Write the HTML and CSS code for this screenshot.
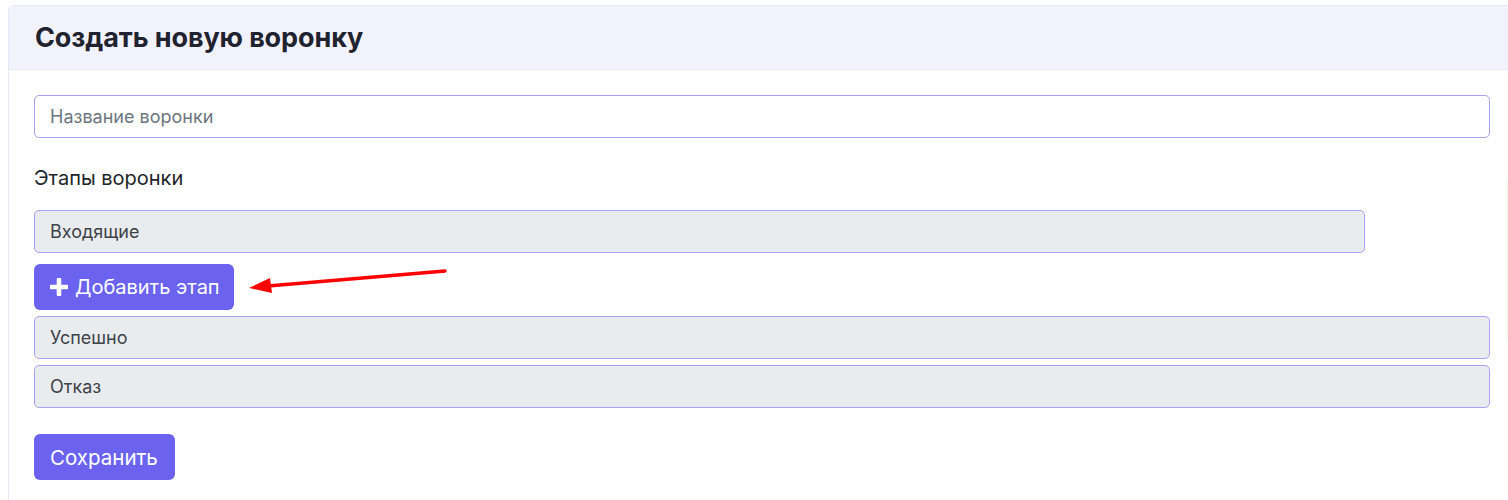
FILE: index.html
```html
<!DOCTYPE html>
<html lang="ru">
<head>
<meta charset="utf-8">
<title>Создать новую воронку</title>
<link rel="stylesheet" href="styles.css">
</head>
<body>
<div class="card">
  <div class="card-header">
    <h1 class="title">Создать новую воронку</h1>
  </div>
  <div class="card-body">
    <input class="field" type="text" placeholder="Название воронки">
    <div class="section-label">Этапы воронки</div>
    <div class="stages">
      <div class="stage-row stage-row--first">
        <input class="field field--stage" type="text" value="Входящие" readonly>
      </div>
      <div class="add-wrap">
        <button class="btn btn--add" type="button">
          <svg class="plus" viewBox="0 0 18 18" width="18" height="18" aria-hidden="true">
            <path d="M9 1.5v15M1.5 9h15" stroke="#fff" stroke-width="4.6" stroke-linecap="round"/>
          </svg>
          <span>Добавить этап</span>
        </button>
        <svg class="arrow" viewBox="0 0 210 30" width="210" height="30" aria-hidden="true">
          <path d="M197 5 L20 20" stroke="#ff0000" stroke-width="3.4" stroke-linecap="round" fill="none"/>
          <path d="M1 22 L22 12 L24 27 Z" fill="#ff0000"/>
        </svg>
      </div>
      <div class="stage-row">
        <input class="field field--stage" type="text" value="Успешно" readonly>
      </div>
      <div class="stage-row">
        <input class="field field--stage" type="text" value="Отказ" readonly>
      </div>
    </div>
    <button class="btn btn--save" type="button">Сохранить</button>
  </div>
</div>
<div class="edge-mark"></div>
</body>
</html>
```

FILE: styles.css
```css
html, body {
  overflow: hidden;
}

body {
  margin: 0;
  padding: 5px 0 0 8px;
  background: #ffffff;
  font-family: Inter, "Noto Sans", "Liberation Sans", sans-serif;
  color: #212529;
  width: 1508px;
  box-sizing: border-box;
  height: 500px;
  position: relative;
}

.card {
  width: 1510px;
  border: 1px solid #e7e6f7;
  border-right: none;
  border-radius: 6px 0 0 0;
  background: #ffffff;
  min-height: 520px;
}

.card-header {
  height: 63px;
  background: #f2f2fc;
  border-bottom: 1px solid #e7e6f7;
  border-radius: 6px 0 0 0;
  display: flex;
  align-items: center;
  padding: 0 26px;
}

.title {
  margin: 0;
  font-size: 27px;
  font-weight: 700;
  color: #1f2330;
  letter-spacing: -0.1px;
}

.card-body {
  padding: 25px 25px 25px 25px;
  display: flex;
  flex-direction: column;
  align-items: flex-start;
}

.field {
  display: block;
  box-sizing: border-box;
  width: 1456px;
  height: 43px;
  border: 1px solid #a7a2f3;
  border-radius: 5px;
  padding: 0 15px;
  font-family: inherit;
  font-size: 18px;
  color: #495057;
  background: #ffffff;
  outline: none;
}

.field::placeholder {
  color: #6c757d;
}

.field--stage {
  background: #e9ecef;
  color: #3d4248;
}

.section-label {
  margin-top: 27px;
  margin-bottom: 18px;
  font-size: 20px;
  line-height: 27px;
  color: #212529;
}

.stages {
  display: flex;
  flex-direction: column;
  gap: 6px;
}

.stage-row--first {
  margin-bottom: 5px;
}

.stage-row--first .field {
  width: 1331px;
}

.add-wrap {
  position: relative;
  align-self: flex-start;
}

.btn {
  display: inline-flex;
  align-items: center;
  box-sizing: border-box;
  height: 46px;
  border: none;
  border-radius: 6px;
  background: #6b63ef;
  color: #ffffff;
  font-family: inherit;
  font-size: 20px;
  padding: 0 16px;
  white-space: nowrap;
  cursor: pointer;
}

.btn--add {
  width: 200px;
  gap: 7px;
  padding-right: 0;
}

.plus {
  flex: none;
}

.arrow {
  position: absolute;
  left: 214px;
  top: 2px;
}

.btn--save {
  margin-top: 26px;
  width: 141px;
  font-size: 20.5px;
}

.edge-mark {
  position: absolute;
  right: 0;
  top: 180px;
  width: 2px;
  height: 160px;
  background: #f1fbea;
}
```
